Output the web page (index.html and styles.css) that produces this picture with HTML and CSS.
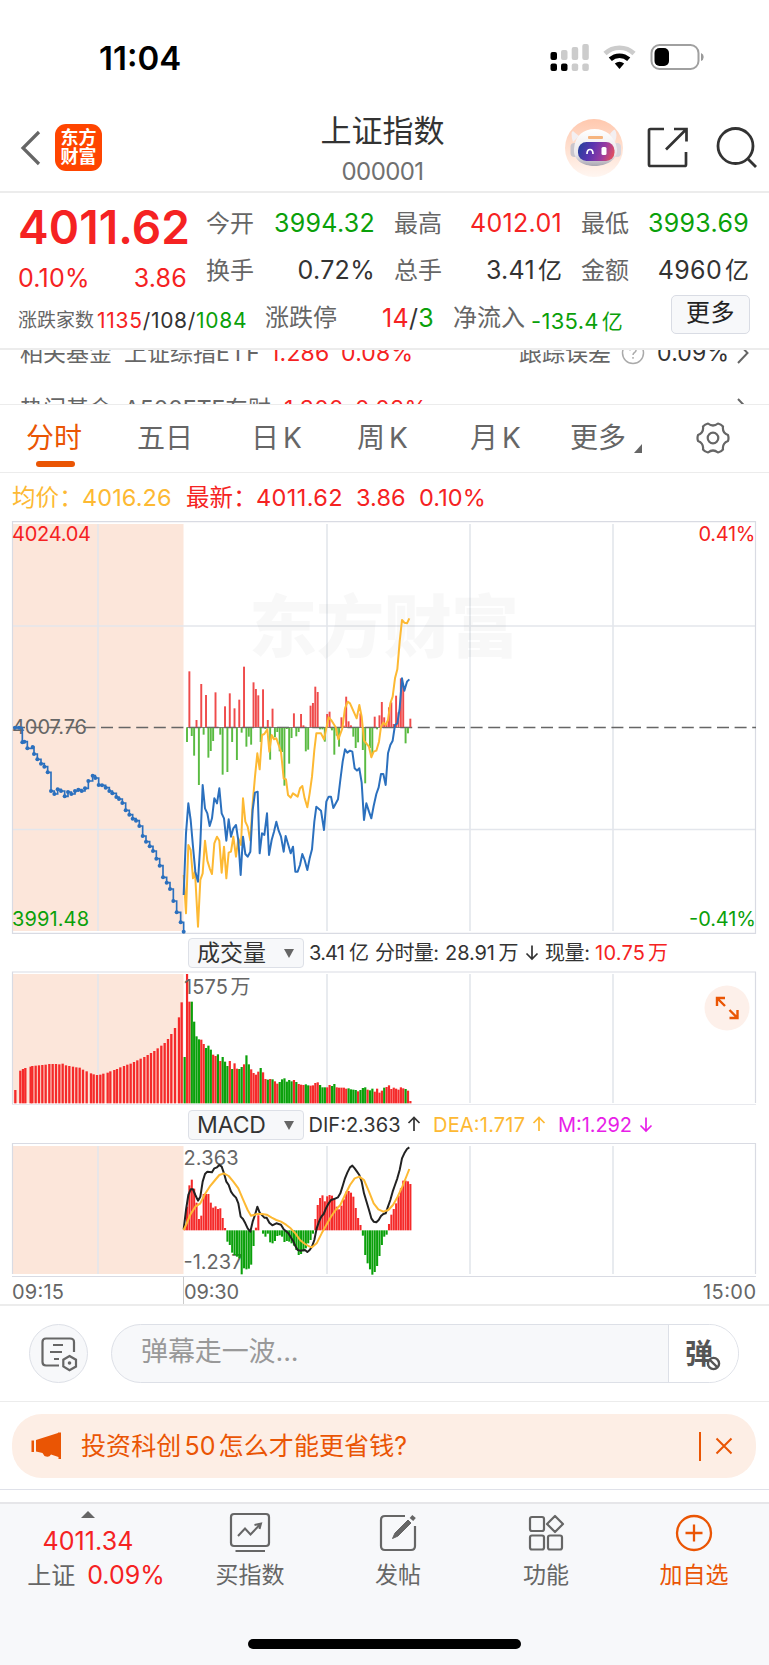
FILE: index.html
```html
<!DOCTYPE html>
<html lang="zh-CN">
<head>
<meta charset="utf-8">
<title>上证指数</title>
<link rel="stylesheet" href="styles.css">
</head>
<body>
<div class="app">
  <div class="status">
    <span class="clock">11:04</span>
    <svg class="status-icons" width="156" height="30" viewBox="550 43 156 30">
      <g fill="#ccc"><rect x="562" y="50" width="6.5" height="10" rx="2"/><rect x="572.7" y="47" width="6.5" height="13" rx="2"/><rect x="583.3" y="44" width="6.5" height="16" rx="2"/><rect x="572.7" y="63.500" width="6.500" height="7.500" rx="2"/><rect x="583.3" y="63.5" width="6.5" height="7.5" rx="2"/></g>
      <g fill="#000"><rect x="551.5" y="52" width="6.5" height="8" rx="2"/><rect x="551.5" y="63.5" width="6.5" height="7.500" rx="2"/><rect x="562" y="63.500" width="6.5" height="7.5" rx="2"/></g>
      <path d="M606 53.500A21 21 0 0 1 635 53.500" fill="none" stroke="#ccc" stroke-width="4.600"/>
      <path d="M611.300 59.300A13.500 13.500 0 0 1 629.700 59.300" fill="none" stroke="#000" stroke-width="4.600"/>
      <path d="M615.800 63.600Q620.500 59.800 625.200 63.600L620.500 69Z"/>
      <rect x="652.500" y="45" width="47" height="24" rx="8" fill="none" stroke="#a0a0a0" stroke-width="2"/>
      <rect x="655.500" y="48" width="14.500" height="18" rx="5"/>
      <path d="M702 53Q704.700 54 704.700 57Q704.700 60 702 61Z" fill="#999"/>
    </svg>
  </div>

  <header class="header">
    <svg class="back" width="24" height="36" viewBox="0 0 24 36"><path d="M20 2L4 18L20 34" fill="none" stroke="#666" stroke-width="3.200"/></svg>
    <div class="logo"><span>东方</span><span>财富</span></div>
    <div class="title"><h1>上证指数</h1><span>000001</span></div>
    <svg class="robot" width="58" height="58" viewBox="0 0 58 58">
      <defs>
        <linearGradient id="halo" x1="0" y1="0" x2="0" y2="1"><stop offset="0" stop-color="#ffc8ae"/><stop offset=".5" stop-color="#ffe0d0"/><stop offset="1" stop-color="#fff6f1"/></linearGradient>
        <linearGradient id="visor" x1="0" y1=".4" x2="1" y2=".6"><stop offset="0" stop-color="#2a3f9e"/><stop offset=".35" stop-color="#5a35b0"/><stop offset=".7" stop-color="#9b3aa0"/><stop offset="1" stop-color="#e2505e"/></linearGradient>
        <linearGradient id="shell" x1="0" y1="0" x2="0" y2="1"><stop offset="0" stop-color="#fff"/><stop offset=".7" stop-color="#e9e6ea"/><stop offset="1" stop-color="#a8a5b0"/></linearGradient>
      </defs>
      <circle cx="29" cy="29" r="29" fill="url(#halo)"/>
      <path d="M8 23Q5 13 8 12Q10 14 14 17ZM45 15Q49 10 50 11Q53 15 50 23Z" fill="#f3eff2"/>
      <rect x="5.500" y="24" width="8" height="14" rx="4" fill="#c9c5cc"/><rect x="48" y="24" width="8" height="14" rx="4" fill="#d9d5dc"/>
      <path d="M9 30C10 16 19 10 29.500 10S50 16 52 30C53 41 41 47 29.500 47S8 41 9 30Z" fill="url(#shell)"/>
      <rect x="23" y="17" width="15" height="3" rx="1" fill="#f6b47e"/>
      <rect x="13" y="23" width="36.500" height="19" rx="8.500" fill="url(#visor)"/>
      <path d="M22 35Q22 30.500 25 30.500T28 35" fill="none" stroke="#fff" stroke-width="1.700"/>
      <rect x="36.500" y="28" width="5" height="8" rx="1.500" fill="#fff"/>
    </svg>
    <svg class="share" width="42" height="42" viewBox="0 0 42 42" fill="none" stroke="#333" stroke-width="2.700"><path d="M17 2H3.500Q2 2 2 3.500V37.500Q2 39 3.500 39H37.500Q39 39 39 37.500V25"/><path d="M27 2H39.500V14.500M39 2.500L19 22.500"/></svg>
    <svg class="search" width="44" height="44" viewBox="0 0 44 44" fill="none" stroke="#333" stroke-width="2.800"><circle cx="20.500" cy="21" r="17.500"/><path d="M32.500 33.500L41 42"/></svg>
  </header>

  <section class="quote">
    <div class="q-main">
      <div class="price">4011.62</div>
      <div class="chg"><span>0.10%</span><span>3.86</span></div>
    </div>
    <div class="q-grid">
      <span class="k">今开</span><span class="v g">3994.32</span>
      <span class="k">最高</span><span class="v r">4012.01</span>
      <span class="k">最低</span><span class="v g">3993.69</span>
      <span class="k">换手</span><span class="v">0.72%</span>
      <span class="k">总手</span><span class="v">3.41<i>亿</i></span>
      <span class="k">金额</span><span class="v">4960<i>亿</i></span>
    </div>
    <div class="q-foot">
      <span class="k small">涨跌家数</span><span class="v counts"><b class="r">1135</b>/108/<b class="g">1084</b></span>
      <span class="k">涨跌停</span><span class="v"><b class="r">14</b>/<b class="g">3</b></span>
      <span class="k">净流入</span><span class="v g flow">-135.4<i>亿</i></span>
      <span class="more">更多</span>
    </div>
  </section>

  <section class="funds">
    <div class="fund"><span class="f-name">相关基金</span><span class="f-code">上证综指<em>ETF</em></span><span class="r">1.286</span><span class="r">0.08%</span>
      <span class="f-err">跟踪误差</span><svg class="q-mark" width="24" height="24" viewBox="0 0 24 24"><circle cx="12" cy="12" r="10.500" fill="none" stroke="#aaa" stroke-width="1.500"/><path d="M9 9.500Q9 6.500 12 6.500T15 9.500C15 11.500 12 11.500 12 14M12 16V17.800" fill="none" stroke="#aaa" stroke-width="1.500"/></svg><span class="f-val">0.09%</span>
      <svg class="arrow" width="12" height="22" viewBox="0 0 12 22"><path d="M1 1L10.500 11L1 21" fill="none" stroke="#666" stroke-width="2"/></svg></div>
    <div class="fund hot"><span class="f-name">热门基金</span><span class="f-code">A500ETF东财</span><span class="r">1.300</span><span class="r">0.08%</span>
      <svg class="arrow" width="12" height="22" viewBox="0 0 12 22"><path d="M1 1L10.500 11L1 21" fill="none" stroke="#666" stroke-width="2"/></svg></div>
  </section>

  <nav class="tabs">
    <span class="on">分时</span><span>五日</span><span>日<em>K</em></span><span>周<em>K</em></span><span>月<em>K</em></span>
    <span class="tab-more">更多<svg width="8" height="9" viewBox="0 0 8 9"><path d="M8 0V9H0Z" fill="#666"/></svg></span>
    <svg class="gear" width="34" height="32" viewBox="-17 -16 34 32" fill="none" stroke="#666" stroke-width="2.200"><path d="M15 -2.900Q9.100 -5.200 10 -11.500Q8 -13.900 5 -14.500Q0 -10.500 -5 -14.500Q-8 -13.900 -10 -11.500Q-9.100 -5.200 -15 -2.900Q-16 0 -15 2.900Q-9.100 5.200 -10 11.500Q-8 13.900 -5 14.500Q0 10.500 5 14.500Q8 13.900 10 11.500Q9.100 5.200 15 2.900Q16 0 15 -2.900Z" stroke-linejoin="round"/><circle r="5.300"/></svg>
  </nav>

  <div class="legend"><span class="y avg">均价：</span><span class="y n1">4016.26</span><span class="r last">最新：</span><span class="r n2">4011.62</span><span class="r n3">3.86</span><span class="r n4">0.10%</span></div>

  <svg class="panel" width="769" height="413" viewBox="0 0 769 413">
    <rect x="12.500" y="3" width="171" height="407" fill="#fce6da"/>
    <g class="grid"><path d="M98 3V410M327 3V410M470 3V410M613 3V410M12 105H756M12 308.500H756"/></g>
    <path class="frame" d="M12.500 .700H755.500V412.300H12.500Z"/>
    <text class="mark" x="249" y="131" textLength="270">东方财富</text>
    <path d="M12 206.500H756" stroke="#666" stroke-width="1.300" stroke-dasharray="12 5.600" stroke-dashoffset="-1"/>
    <text class="lab" x="12" y="212.500" textLength="75">4007.76</text>
    <g id="preopen" transform="translate(0 -51) scale(.33333)"></g>
    <g id="flow" transform="translate(175 49) scale(.33333)"></g>
    <g transform="translate(175 49) scale(.33333)" fill="none" stroke-linejoin="round">
      <path d="M36 472.500H706" stroke="#666" stroke-width="2.500"/>
      <polyline stroke="#fdb933" stroke-width="6" points="26,915 33,1030 40,825 47,840 54,925 60,905 69,1070 76,930 83,910 90,812 97,872 104,895 111,912 118,820 126,800 133,812 140,908 147,830 154,925 161,848 168,845 175,800 183,860 190,805 198,825 204,685 211,755 218,770 226,812 233,700 240,620 247,550 254,598 261,495 268,492 277,478 283,545 290,495 297,508 304,505 318,545 326,625 333,628 339,675 347,683 354,670 368,680 375,655 382,648 389,685 397,712 404,670 411,620 418,540 424,490 438,490 447,508 461,442 470,452 482,472 490,508 502,475 510,415 518,395 525,400 545,445 553,405 560,440 567,512 582,530 589,562 596,545 604,542 612,515 618,470 625,458 632,465 639,450 646,400 653,380 660,325 667,298 674,215 681,150 688,158 696,160 703,145"/>
      <polyline stroke="#2b70be" stroke-width="6" points="26,975 33,790 40,700 47,750 54,830 61,905 69,935 76,820 83,645 90,715 97,730 104,768 111,745 118,685 126,700 133,655 140,730 147,745 154,812 161,748 168,800 175,775 183,765 190,812 197,915 204,800 211,852 218,860 226,845 233,720 240,668 248,665 254,850 261,790 268,795 276,730 282,855 290,810 297,785 304,755 311,782 318,800 326,845 332,798 340,825 347,850 354,830 361,905 368,905 375,885 382,852 389,870 397,900 404,865 411,838 418,755 424,710 438,722 447,780 454,695 461,680 468,680 475,714 489,688 496,630 503,575 510,538 517,548 525,542 532,545 539,595 546,602 553,595 560,638 567,750 574,700 582,725 589,745 596,708 604,672 611,652 618,612 625,612 632,645 639,550 646,525 653,512 660,465 667,460 674,415 681,325 688,362 696,335 703,328"/>
    </g>
    <text class="lab red" x="12" y="20" textLength="79">4024.04</text>
    <text class="lab green" x="12" y="405" textLength="77">3991.48</text>
    <text class="lab red" x="698.500" y="20" textLength="57">0.41%</text>
    <text class="lab green" x="689" y="405" textLength="67">-0.41%</text>
  </svg>

  <div class="tool t-vol">
    <span class="pick">成交量<svg width="10" height="9" viewBox="0 0 10 9"><path d="M0 0H10L5 9Z" fill="#666"/></svg></span>
    <svg class="read" width="460" height="30" viewBox="304 0 460 30">
      <text x="309" y="22" textLength="36">3.41</text><text x="349" y="22">亿</text><text x="375" y="22" textLength="64">分时量:</text><text x="445" y="22" textLength="50">28.91</text><text x="498.500" y="22">万</text>
      <path class="ar" d="M532 7.500V21M526.500 15.500L532 21L537.500 15.500"/>
      <text x="545" y="22" textLength="45">现量:</text><text class="red" x="595" y="22" textLength="50">10.75</text><text class="red" x="648" y="22">万</text>
    </svg>
  </div>

  <div class="vol-wrap">
  <svg class="panel" width="769" height="135" viewBox="0 0 769 135">
    <rect x="12.500" y="3" width="171" height="129" fill="#fce6da"/>
    <g class="grid"><path d="M98 3V132M327 3V132M470 3V132M613 3V132"/></g>
    <path class="frame" d="M12.500 133V1H755.500V132"/><path class="frame" d="M12 133.500H756" opacity=".6"/>
    <g id="preVol" transform="translate(0 -41) scale(.33333)"></g>
    <g id="vol" transform="translate(175 -51) scale(.33333)"></g>
    <text class="lab" x="184" y="22.500" textLength="44">1575</text><text class="lab" x="230.500" y="22.500">万</text>
  </svg>
  <svg class="expand" width="46" height="46" viewBox="0 0 46 46"><circle cx="23" cy="23" r="22.500" fill="#fdf0ea"/><path d="M13 21V13H21M13.500 13.500L21 21M25.500 33H33.500V25M33 32.500L25.500 25" fill="none" stroke="#ea5504" stroke-width="2.400"/></svg>
  </div>

  <div class="tool t-macd">
    <span class="pick">MACD<svg width="10" height="9" viewBox="0 0 10 9"><path d="M0 0H10L5 9Z" fill="#666"/></svg></span>
    <svg class="read" width="460" height="30" viewBox="304 0 460 30">
      <text x="308.500" y="21.500" textLength="92">DIF:2.363</text><path class="ar" d="M414 21V7.500M408.500 13L414 7.500L419.500 13"/>
      <text class="yel" x="433" y="21.500" textLength="92">DEA:1.717</text><path class="ar ya" d="M539 21V7.500M533.500 13L539 7.500L544.500 13"/>
      <text class="mag" x="558" y="21.500" textLength="74">M:1.292</text><path class="ar ma" d="M646 7.500V21M640.500 15.500L646 21L651.500 15.500"/>
    </svg>
  </div>

  <svg class="panel" width="769" height="163" viewBox="0 0 769 163">
    <rect x="12.500" y="4" width="171" height="128" fill="#fce6da"/>
    <g class="grid"><path d="M98 4V132M327 4V132M470 4V132M613 4V132"/></g>
    <path class="frame" d="M12.500 132V1.500H755.500V132M12 134.500H756"/><path d="M183.500 135V163" stroke="#ccc"/>
    <text class="lab" x="183.500" y="22.500" textLength="55">2.363</text>
    <text class="lab" x="183.500" y="126.500" textLength="59">-1.237</text>
    <g id="macd" transform="translate(175 -222) scale(.33333)"></g>
    <g transform="translate(175 -222) scale(.33333)" fill="none" stroke-linejoin="round">
      <polyline stroke="#222" stroke-width="6" points="26,928 33,870 40,825 47,808 54,808 61,825 69,842 76,830 83,785 90,762 97,755 111,757 118,745 126,742 133,735 140,740 147,760 154,785 161,795 168,815 175,825 183,833 190,850 197,890 204,897 211,910 218,925 226,935 233,905 240,885 247,860 254,878 268,893 275,893 283,908 292,916 304,910 318,914 326,928 340,940 354,962 361,978 368,990 375,992 390,990 397,996 404,990 411,980 418,960 425,925 432,905 439,890 446,882 453,865 461,850 468,840 475,838 489,832 496,820 503,798 510,775 517,758 525,742 532,737 539,745 546,755 553,765 560,785 567,820 582,870 589,895 596,905 604,907 611,900 618,888 625,882 632,880 639,860 646,840 653,815 660,795 667,775 674,750 681,715 688,700 696,687 703,682"/>
      <polyline stroke="#fdb933" stroke-width="6" points="26,930 33,915 47,882 61,860 76,850 90,822 104,800 118,783 133,765 147,760 161,768 175,785 190,805 204,838 218,870 228,887 247,882 261,882 275,884 290,893 304,900 318,905 333,914 347,925 361,940 375,960 390,972 404,980 411,982 425,970 440,940 454,915 468,890 482,870 496,855 510,825 525,795 539,775 553,770 567,780 582,815 596,850 610,868 625,875 640,870 654,855 668,830 682,800 696,765 703,747"/>
    </g>
    <text class="lab" x="12" y="157" textLength="52">09:15</text><text class="lab" x="184" y="157" textLength="55">09:30</text><text class="lab" x="703" y="157" textLength="53">15:00</text>
  </svg>

  <section class="chat">
    <div class="round"><svg width="38" height="36" viewBox="0 0 38 36" fill="none" stroke="#666" stroke-width="2.200"><path d="M19 29.500H6Q2.500 29.500 2.500 26V6Q2.500 2.500 6 2.500H30Q34 2.500 34 6V16M13 9H23M10 16H22M14 23H19"/><path d="M29.500 20L36 23.700V30.500L29.500 34.300L23.300 30.500V23.700Z"/><circle cx="29.500" cy="27" r="1.800" fill="#666" stroke="none"/></svg></div>
    <div class="field"><span class="ph">弹幕走一波...</span><span class="dan">弹<svg width="15" height="15" viewBox="0 0 15 15"><circle cx="7.500" cy="7.500" r="5.600" fill="#fff" stroke="#555" stroke-width="2.400"/><path d="M3.600 3.600L11.400 11.400" stroke="#555" stroke-width="2.200"/></svg></span></div>
  </section>

  <section class="promo"><div class="banner">
    <svg width="32" height="28" viewBox="0 0 32 28" fill="#ea5504"><path d="M0.500 8.500H3V20H.500ZM5 8L27 1V.500H30V27H27.500V25L20 22.500Q18 26 13.500 24L11.500 21L5 19.500Z"/></svg>
    <span class="promo-text">投资科创<em>50</em>怎么才能更省钱?</span><i class="bar"></i>
    <svg width="18" height="18" viewBox="0 0 18 18"><path d="M1.500 1.500L16.500 16.500M16.500 1.500L1.500 16.500" stroke="#ea5504" stroke-width="2"/></svg>
  </div></section>

  <footer class="dock">
    <div class="index"><svg width="14" height="7" viewBox="0 0 14 7"><path d="M7 0L14 7H0Z" fill="#666"/></svg><span class="r">4011.34</span><p>上证<span class="r">0.09%</span></p></div>
    <div class="item"><svg width="42" height="42" viewBox="0 0 42 42" fill="none" stroke="#666" stroke-width="2.200"><rect x="2" y="2" width="38" height="32" rx="3"/><path d="M6.500 39H36M9 24L16 16.500L21.500 22.500L31 12.500M25.500 13L32 11.500L30.500 17" stroke-width="2"/></svg>买指数</div>
    <div class="item"><svg width="42" height="42" viewBox="0 0 42 42" fill="none" stroke="#666" stroke-width="2.200"><path d="M28 4H8Q4 4 4 8V34Q4 38 8 38H34Q38 38 38 34V14"/><path d="M31 8L34 11L21 24L15.500 26.500L18 21Z" fill="#666" stroke-width="1"/><path d="M34 4.500L37.500 7.500" stroke-width="4"/></svg>发帖</div>
    <div class="item"><svg width="42" height="42" viewBox="0 0 42 42" fill="none" stroke="#666" stroke-width="2.200"><rect x="5" y="5" width="14" height="14" rx="2"/><rect x="5" y="23.500" width="14" height="14" rx="2"/><rect x="23" y="23.500" width="14" height="14" rx="2"/><path d="M30 4L38 12L30 20L22 12Z" stroke-linejoin="round"/></svg>功能</div>
    <div class="item add"><svg width="42" height="42" viewBox="0 0 42 42" fill="none" stroke="#ea5504" stroke-width="2.300"><circle cx="21" cy="21" r="17"/><path d="M12.500 21H29.500M21 12.500V29.500"/></svg>加自选</div>
    <div class="home"></div>
  </footer>
</div>
<script src="chart.js"></script>
</body>
</html>
```

FILE: styles.css
```css
* { box-sizing: border-box; }
body { margin: 0; background: #fff; color: #333; font-family: Inter, "Noto Sans CJK SC", sans-serif; font-size: 24px; line-height: 1; }
.app { width: 769px; height: 1665px; display: flex; flex-direction: column; overflow: hidden; }
.app > * { flex-shrink: 0; }
svg { display: block; flex-shrink: 0; }
h1, p { margin: 0; font-weight: 400; }
i, em { font-style: normal; }
b { font-weight: 400; }
.r { color: #f52222; }
.g { color: #0aa00a; }
.y { color: #fdb933; }

.status { height: 104px; display: flex; justify-content: space-between; padding: 42px 64px 0 99px; }
.clock { font-size: 33px; font-weight: 600; color: #000; letter-spacing: 0; line-height: 33px; }
.status-icons { margin-top: 1px; }

.header { height: 89px; display: grid; grid-template-columns: 24px 47px 415px 58px 42px 44px; column-gap: 0; padding-left: 19px; border-bottom: 2px solid #ececec; align-items: start; }
.back { margin-top: 26px; }
.logo { width: 47px; height: 47px; margin: 20px 0 0 12px; background: #ff4500; border-radius: 11px; color: #fff; font-weight: 700; font-size: 18px; display: flex; flex-direction: column; align-items: center; padding-top: 4px; line-height: 19px; }
.title { padding: 10px 0 0 191px; width: 370px; text-align: center; display: flex; flex-direction: column; align-items: center; margin-left: 12px; margin-right: -12px; }
.title h1 { font-size: 31px; line-height: 34px; color: #333; white-space: nowrap; }
.title span { margin-top: 12px; font-size: 24px; line-height: 24px; color: #707070; letter-spacing: -.6px; }
.robot { margin: 15px 0 0 60px; }
.share { margin: 23px 0 0 84px; }
.search { margin: 21px 0 0 110px; }

.quote { height: 157px; display: grid; grid-template-columns: 187px 562px; grid-template-rows: 92px 65px; border-bottom: 2px solid #ececec; }
.q-main { padding: 11px 0 0 18px; }
.price { font-size: 46px; font-weight: 600; color: #f52222; line-height: 46px; letter-spacing: .1px; }
.chg { display: flex; justify-content: space-between; margin-top: 16px; color: #f52222; font-size: 25px; letter-spacing: .2px; line-height: 25px; }
.q-grid { display: grid; grid-template-columns: 50px 119px 69px 118px 69px 118px; grid-template-rows: 47px 47px; align-items: center; padding-left: 19px; padding-top: 7px; }
.k { color: #666; font-size: 24px; white-space: nowrap; }
.q-grid .k:nth-of-type(4n+3) { padding-left: 19px; }
.q-grid .k:nth-of-type(n+5) { padding-left: 19px; }
.q-grid .k:nth-of-type(7) { padding-left: 0; }
.v { font-size: 25px; letter-spacing: .3px; text-align: right; white-space: nowrap; }
.v i { font-size: 24px; margin-left: 3px; letter-spacing: 0; }
.q-foot { grid-column: 1 / 3; display: grid; grid-template-columns: 79px 168px 75px 94px 18px 80px 104px 118px; align-items: center; padding: 1px 0 0 18px; width: 769px; }
.k.small { font-size: 19px; padding-top: 5px; }
.counts { font-size: 21px; letter-spacing: .7px; text-align: left; padding-top: 4px; }
.q-foot .k:nth-child(5) { grid-column: 6; margin-left: 1px; }
.flow { font-size: 22px; padding-top: 5px; grid-column: 7; text-align: left; margin-left: -1px; }
.flow i { font-size: 21px; }
.more { width: 79px; height: 39px; margin: -7px 0 0 35px; border: 1.500px solid #d9dce4; border-radius: 5px; background: #f7f8fa; color: #222; text-align: center; line-height: 34px; letter-spacing: .5px; }

.funds { height: 55px; overflow: hidden; border-bottom: 1px solid #ececec; }
.fund { height: 56px; margin-top: -25px; display: grid; grid-template-columns: 104px 146px 71px 178px 102px 36px 80px 20px; align-items: center; padding-left: 20px; white-space: nowrap; color: #666; font-size: 23px; letter-spacing: 0; }
.fund .r, .f-val { letter-spacing: .2px; }
.fund.hot { margin-top: 0; grid-template-columns: 104px 160px 71px 382px 20px; }
.fund em { letter-spacing: .8px; }
.f-val { color: #333; }

.tabs { height: 68px; position: relative; display: grid; grid-template-columns: 111px 114px 106px 113px 100px 126px 34px; align-items: center; padding: 0 0 1px 26px; border-bottom: 1px solid #ececec; color: #666; font-size: 28px; }
.tabs em { margin-left: 4px; }
.tabs .on { color: #ea5504; position: relative; }
.on::after { content: ""; position: absolute; left: 10px; top: 37px; width: 39px; height: 6px; border-radius: 3px; background: #ea5504; }
.tab-more { display: flex; align-items: flex-end; gap: 8px; }
.tab-more svg { margin-bottom: -1px; }
.gear { margin-top: -1px; }

.legend { height: 48px; display: grid; grid-template-columns: 70px 104px 70px 100px 63px 80px; align-items: center; padding: 2px 0 0 12px; font-size: 23.500px; letter-spacing: .1px; white-space: nowrap; }
.n2 { letter-spacing: .4px; }

.panel text, .read text { font-family: Inter, "Noto Sans CJK SC", sans-serif; font-size: 20px; fill: #333; }
.panel .lab { fill: #666; }
.panel .red, .read .red { fill: #f52222; }
.panel .green { fill: #0aa00a; }
.read .yel { fill: #fdb933; }
.read .mag { fill: #e81ee8; }
.panel .mark { font-size: 68px; font-weight: 900; fill: #777; fill-opacity: .055; }
.grid { fill: none; stroke: #e3e6ec; stroke-width: 1.600; }
.frame { fill: none; stroke: #d9dbe3; stroke-width: 1.200; }
.ar { fill: none; stroke: #333; stroke-width: 1.700; }
.ya { stroke: #fdb933; }
.ma { stroke: #e81ee8; }

.tool { height: 37px; display: flex; padding: 4px 0 0 188px; }
.t-macd { height: 36px; }
.pick { width: 116px; height: 30px; border: 1.500px solid #dde0e7; border-radius: 4px; background: #f7f8fa; display: flex; align-items: center; justify-content: space-between; padding: 0 9px 0 8px; font-size: 23px; line-height: 26px; }
.t-macd .pick { letter-spacing: -.1px; }
.vol-wrap { position: relative; height: 135px; }
.expand { position: absolute; left: 704px; top: 14px; }

.chat { height: 98px; border-top: 2px solid #ececec; border-bottom: 1px solid #ececec; display: flex; gap: 23px; padding: 18px 0 0 29px; margin-top: -1px; margin-bottom: 1px; }
.round { width: 59px; height: 59px; border: 1.500px solid #dde0e7; border-radius: 50%; background: #f7f8fa; display: flex; align-items: center; justify-content: center; }
.field { width: 628px; height: 59px; border: 1.500px solid #dde0e7; border-radius: 30px; background: #f7f8fa; display: flex; justify-content: space-between; overflow: hidden; }
.ph { padding: 13px 0 0 29px; font-size: 27px; line-height: 28px; color: #999; letter-spacing: -.1px; }
.dan { position: relative; width: 70px; background: #fff; border-left: 1px solid #dde0e7; color: #555; font-size: 28px; font-weight: 700; padding: 15px 0 0 16px; line-height: 28px; }
.dan svg { position: absolute; left: 37px; top: 31px; }
.promo { height: 88px; border-bottom: 1px solid #dfe1e9; padding: 12px 13px 0 12px; margin-top: -1px; }
.banner { height: 64px; border-radius: 30px; background: #fdeee5; color: #ea5504; display: grid; grid-template-columns: 50px 618px 16px 20px; align-items: center; padding-left: 19px; }
.promo-text { font-size: 25px; letter-spacing: .1px; white-space: nowrap; }
.promo-text em { margin: 0 3px; }
.bar { width: 1.500px; height: 29px; background: #ea5504; }

.dock { height: 175px; margin-top: 12px; border-top: 2px solid #e6e6e9; background: #f7f8fa; display: grid; grid-template-columns: 179px 142px 154px 142px 154px; position: relative; }
.index { display: flex; flex-direction: column; align-items: center; padding: 7px 3px 0 0; color: #666; font-size: 25px; letter-spacing: .1px; }
.index > .r { margin-top: 8px; line-height: 30px; }
.index p { margin-top: 1px; padding-left: 16px; line-height: 36px; font-size: 24px; letter-spacing: 0; }
.index p .r { margin-left: 12px; font-size: 25px; letter-spacing: 0; }
.item { display: flex; flex-direction: column; align-items: center; padding-top: 8px; color: #666; font-size: 23px; line-height: 24px; gap: 9px; }
.item.add { color: #ea5504; }
.home { position: absolute; left: 248px; top: 135px; width: 273px; height: 10px; border-radius: 5px; background: #000; }
```

FILE: chart.js
```js
const NS = "http://www.w3.org/2000/svg";
const RED = "#f52a2a";
const GREEN = "#0aa00a";

function rect(id, x, y1, y2, fill, w) {
  const el = document.createElementNS(NS, "rect");
  el.setAttribute("x", x - w / 2);
  el.setAttribute("y", Math.min(y1, y2));
  el.setAttribute("width", w);
  el.setAttribute("height", Math.abs(y2 - y1));
  el.setAttribute("fill", fill);
  document.getElementById(id).appendChild(el);
}

// Net flow per minute around the previous close
const flow = [-44,168,-26,-85,22,-173,130,-22,97,-91,-71,-41,105,1,-22,-142,63,-134,102,-44,57,-98,83,-16,182,-58,-28,-52,135,115,96,-44,114,-5,22,-97,56,-30,-14,-72,-74,-175,-5,-109,-32,42,-27,-14,40,6,-72,-67,65,73,122,106,-6,-6,-43,40,47,-9,-82,-25,-58,30,5,92,18,6,-28,-62,-45,42,-68,-168,0,-62,-80,32,-6,36,76,30,12,60,75,10,95,45,147,125,-48,-18,26];
flow.forEach((v, i) => rect("flow", 36 + i * 7.128, 472, 472 - v, v > 0 ? "#ef4b4b" : "#5abb42", 5.8));

// Call auction price, drawn as steps
const pre = [[45,773],[57,773],[67,817],[73,815],[82,835],[98,831],[102,852],[112,868],[123,881],[133,890],[143,907],[153,963],[163,972],[173,958],[183,963],[194,979],[204,966],[214,972],[225,963],[235,959],[245,963],[255,955],[265,933],[278,917],[286,924],[296,945],[306,946],[317,953],[328,963],[337,970],[349,981],[357,987],[367,999],[377,1021],[388,1034],[398,1046],[408,1052],[418,1068],[428,1098],[438,1115],[449,1129],[459,1143],[469,1166],[479,1187],[489,1222],[500,1238],[510,1257],[520,1293],[530,1327],[542,1357],[551,1385]];
const path = document.createElementNS(NS, "path");
path.setAttribute("d", pre.map(([x, y], i) => i ? `H${x}V${y}` : `M${x} ${y}`).join(""));
path.setAttribute("fill", "none");
path.setAttribute("stroke", "#2b70be");
path.setAttribute("stroke-width", 5);
document.getElementById("preopen").appendChild(path);
pre.forEach(([x, y]) => {
  const c = document.createElementNS(NS, "circle");
  c.setAttribute("cx", x); c.setAttribute("cy", y); c.setAttribute("r", 6); c.setAttribute("fill", "#2b70be");
  document.getElementById("preopen").appendChild(c);
});

// Call auction volume
[[46,480],[61,422],[69,417],[76,414],[92,410],[97,408],[107,407],[117,406],[127,405],[137,404],[148,402],[158,402],[168,402],[178,403],[188,401],[198,406],[208,408],[219,410],[229,412],[239,413],[249,419],[260,424],[273,430],[281,433],[291,435],[301,434],[310,431],[323,428],[331,424],[343,420],[351,417],[361,412],[372,408],[382,404],[392,401],[402,396],[412,391],[422,386],[433,381],[443,375],[453,369],[463,363],[473,355],[484,347],[494,339],[504,327],[514,312],[525,294],[537,262],[545,217]]
  .forEach(([x, y]) => rect("preVol", x, y, 520, RED, 7));

// Traded volume per minute, G marks a falling minute
"411G 162R 245R 245G 305G 349G 358G 359R 372R 384G 377G 389G 404R 408R 403G 423R 411G 425G 438G 423R 447G 430R 446R 447G 441G 433R 406G 433G 448R 459R 464R 455R 444G 457R 477R 479G 477R 478G 484R 491R 486G 478G 475G 485G 480G 484G 480R 486G 492R 494R 495R 493G 496G 497R 496R 489R 487R 495G 502G 502G 502R 495R 498G 492G 502R 503R 503R 503R 506R 505G 508G 509G 510G 514R 510G 504G 502G 509R 511G 506G 515R 506R 518R 512R 503G 501R 496R 507R 503R 506R 509R 502R 505R 507G 512R 543R"
  .split(" ").forEach((s, i) => rect("vol", 29 + i * 7.128, parseInt(s, 10), 550, s.endsWith("G") ? GREEN : RED, 6.6));

// MACD histogram
[920,860,796,779,806,848,897,887,822,822,822,848,863,859,867,865,894,924,965,975,998,1005,1010,1015,1063,1045,1048,1046,1034,978,923,886,931,941,950,941,967,970,963,948,946,950,966,963,965,970,977,990,1005,1002,994,985,970,960,941,897,855,834,826,844,829,825,827,834,860,868,857,838,815,813,818,830,864,894,915,947,1005,1030,1048,1064,1056,1038,1008,975,950,944,912,884,867,850,827,805,782,782,784,792]
  .forEach((y, i) => rect("macd", 29 + i * 7.128, y, 931, y < 931 ? RED : GREEN, 6.2));
```
